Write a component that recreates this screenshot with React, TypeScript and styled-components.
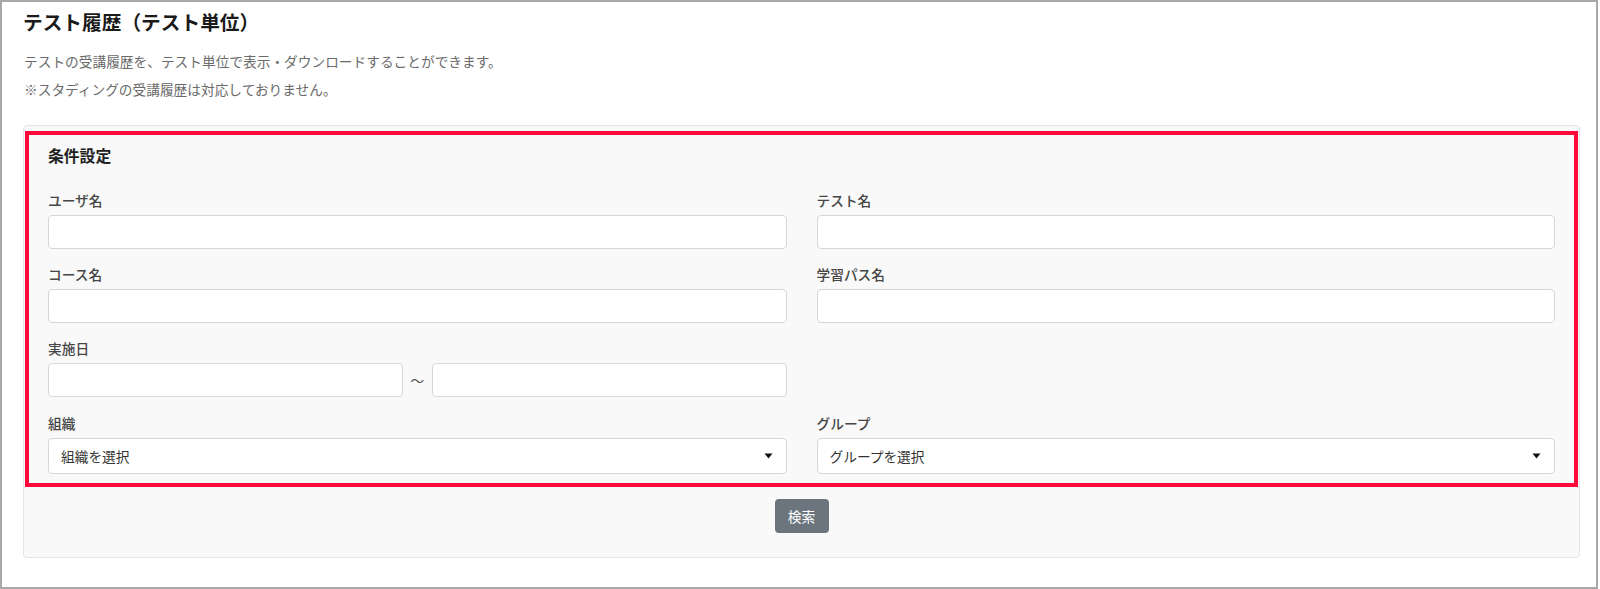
import React from "react";
import styled, { createGlobalStyle } from "styled-components";

const GlobalStyle = createGlobalStyle`
  html, body {
    margin: 0;
    padding: 0;
    background: #ffffff;
  }
  body {
    font-family: "Noto Sans CJK JP", "Noto Sans", sans-serif;
    color: #333;
  }
  * { box-sizing: border-box; }
`;

const Frame = styled.div`
  width: 1598px;
  height: 589px;
  border: 2px solid #a8a8a8;
  background: #fff;
  overflow: hidden;
`;

const Page = styled.div`
  padding: 7px 16px 0 21px;
`;

const Title = styled.h1`
  margin: 0;
  font-size: 19.7px;
  line-height: 26px;
  font-weight: 700;
  color: #1a1a1a;
`;

const Lead = styled.div`
  margin-top: 11.75px;
  margin-bottom: 21.25px;
`;

const Desc = styled.p`
  margin: 0;
  font-size: 13.7px;
  line-height: 28.5px;
  color: #6a6a6a;
  padding-left: 1px;
`;

const Card = styled.div`
  width: 1557px;
  border: 1px solid #e1e4e8;
  border-radius: 4px;
  background: #f9f9f9;
  padding: 5px 1px 24px 1px;
`;

const Highlight = styled.section`
  border: 4px solid #ff0a3a;
  padding: 9.5px 19px 9.5px 19px;
`;

const SectionTitle = styled.h2`
  margin: 0 0 23px 0;
  font-size: 15.8px;
  line-height: 22px;
  font-weight: 700;
  color: #222;
`;

const FieldGrid = styled.div`
  display: grid;
  grid-template-columns: 1fr 1fr;
  column-gap: 30px;
  row-gap: 15.4px;
`;

const Field = styled.div`
  display: flex;
  flex-direction: column;
  min-width: 0;
`;

const Label = styled.label`
  font-size: 13.7px;
  line-height: 20px;
  font-weight: 500;
  color: #454545;
  margin-bottom: 5px;
`;

const TextInput = styled.input`
  display: block;
  width: 100%;
  height: 34px;
  border: 1px solid #d3d7dc;
  border-radius: 4px;
  background: #fff;
  padding: 0 12px;
  font-family: inherit;
  font-size: 13.7px;
  color: #333;
  outline: none;
`;

const DateRange = styled.div`
  display: grid;
  grid-template-columns: 1fr 29px 1fr;
  align-items: center;
`;

const Tilde = styled.span`
  text-align: center;
  font-size: 14px;
  line-height: 20px;
  color: #555;
`;

const SelectBox = styled.div`
  display: flex;
  align-items: center;
  justify-content: space-between;
  height: 36px;
  border: 1px solid #d3d7dc;
  border-radius: 4px;
  background: #fff;
  padding: 0 13px 0 12px;
  font-size: 13.7px;
  color: #333;
`;

const SelectText = styled.span`
  line-height: 20px;
`;

const Caret = styled.svg`
  width: 9px;
  height: 6px;
  display: block;
`;

const ButtonRow = styled.div`
  display: flex;
  justify-content: center;
  margin-top: 11.5px;
`;

const SearchButton = styled.button`
  width: 54px;
  height: 34px;
  border: none;
  border-radius: 4px;
  background: #6c757d;
  color: #fff;
  font-family: inherit;
  font-size: 13.7px;
  padding: 0;
  cursor: pointer;
`;

const Select: React.FC<{ placeholder: string }> = ({ placeholder }) => (
  <SelectBox>
    <SelectText>{placeholder}</SelectText>
    <Caret viewBox="0 0 9 6">
      <path d="M0.5 0.5 H8.5 L4.5 5.5 Z" fill="#111" />
    </Caret>
  </SelectBox>
);

export default function App() {
  return (
    <>
      <GlobalStyle />
      <Frame>
        <Page>
          <Title>テスト履歴（テスト単位）</Title>
          <Lead>
            <Desc>テストの受講履歴を、テスト単位で表示・ダウンロードすることができます。</Desc>
            <Desc>※スタディングの受講履歴は対応しておりません。</Desc>
          </Lead>
          <Card>
            <Highlight>
              <SectionTitle>条件設定</SectionTitle>
              <FieldGrid>
                <Field>
                  <Label>ユーザ名</Label>
                  <TextInput type="text" />
                </Field>
                <Field>
                  <Label>テスト名</Label>
                  <TextInput type="text" />
                </Field>
                <Field>
                  <Label>コース名</Label>
                  <TextInput type="text" />
                </Field>
                <Field>
                  <Label>学習パス名</Label>
                  <TextInput type="text" />
                </Field>
                <Field>
                  <Label>実施日</Label>
                  <DateRange>
                    <TextInput type="text" />
                    <Tilde>～</Tilde>
                    <TextInput type="text" />
                  </DateRange>
                </Field>
                <div />
                <Field>
                  <Label>組織</Label>
                  <Select placeholder="組織を選択" />
                </Field>
                <Field>
                  <Label>グループ</Label>
                  <Select placeholder="グループを選択" />
                </Field>
              </FieldGrid>
            </Highlight>
            <ButtonRow>
              <SearchButton type="button">検索</SearchButton>
            </ButtonRow>
          </Card>
        </Page>
      </Frame>
    </>
  );
}
